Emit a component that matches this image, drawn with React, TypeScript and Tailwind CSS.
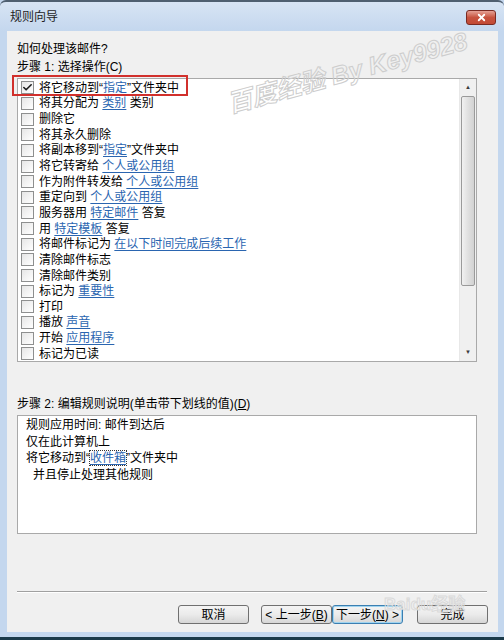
import { Check, X } from "lucide-react";

const font = "font-['Liberation_Sans','Noto_Sans_CJK_SC',sans-serif]";

type Part = { text: string; link?: boolean };

const ACTIONS: Part[][] = [
  [{ text: "将它移动到“" }, { text: "指定", link: true }, { text: "”文件夹中" }],
  [{ text: "将其分配为 " }, { text: "类别", link: true }, { text: " 类别" }],
  [{ text: "删除它" }],
  [{ text: "将其永久删除" }],
  [{ text: "将副本移到“" }, { text: "指定", link: true }, { text: "”文件夹中" }],
  [{ text: "将它转寄给 " }, { text: "个人或公用组", link: true }],
  [{ text: "作为附件转发给 " }, { text: "个人或公用组", link: true }],
  [{ text: "重定向到 " }, { text: "个人或公用组", link: true }],
  [{ text: "服务器用 " }, { text: "特定邮件", link: true }, { text: " 答复" }],
  [{ text: "用 " }, { text: "特定模板", link: true }, { text: " 答复" }],
  [{ text: "将邮件标记为 " }, { text: "在以下时间完成后续工作", link: true }],
  [{ text: "清除邮件标志" }],
  [{ text: "清除邮件类别" }],
  [{ text: "标记为 " }, { text: "重要性", link: true }],
  [{ text: "打印" }],
  [{ text: "播放 " }, { text: "声音", link: true }],
  [{ text: "开始 " }, { text: "应用程序", link: true }],
  [{ text: "标记为已读" }],
];

function CheckBox({ checked }: { checked?: boolean }) {
  return (
    <span className="w-[13px] h-[13px] border border-[#8e8f8f] bg-gradient-to-br from-[#e6e6e6] to-white flex items-center justify-center flex-shrink-0">
      {checked && <Check className="w-[11px] h-[11px] text-[#1c1c1c]" strokeWidth={3.5} />}
    </span>
  );
}

function Button({ label, focused }: { label: React.ReactNode; focused?: boolean }) {
  return (
    <button
      className={`h-[19px] w-[71px] rounded-[3px] border text-[12px] leading-none text-black flex items-center justify-center bg-gradient-to-b from-[#f4f4f4] via-[#ebebeb] to-[#d6d6d6] ${
        focused ? "border-[#3c7fb1] shadow-[inset_0_0_0_1px_#9fd4f0]" : "border-[#707070]"
      }`}
    >
      {label}
    </button>
  );
}

export default function App() {
  return (
    <div className={`${font} relative w-[504px] h-[640px] bg-[#c4d7ee] flex flex-col overflow-hidden`}>
      {/* Title bar */}
      <div className="h-[31px] flex-shrink-0 flex items-center justify-between pl-[10px] pr-[8px] border-t-2 border-[#4f5f70] rounded-t-[6px] bg-gradient-to-b from-[#d7e4f4] to-[#c4d7ee]">
        <span className="text-[12px] text-[#1e1e1e] mt-[1px]">规则向导</span>
        <div className="w-[30px] h-[15px] mt-[1px] rounded-[3px] border border-[#7a2a22] bg-gradient-to-b from-[#e5a195] via-[#c7533f] to-[#c24a35] flex items-center justify-center">
          <X className="w-[11px] h-[11px] text-white" strokeWidth={4} />
        </div>
      </div>

      {/* Client area */}
      <div className="mx-[7px] w-[491px] h-[601px] bg-[#f0f0f0] flex flex-col pl-[10px] text-[12px] text-black">
        <div className="mt-[10px] leading-[16px]">如何处理该邮件?</div>
        <div className="mt-[2px] leading-[16px]">步骤 1: 选择操作(C)</div>

        {/* Action list */}
        <div className="relative mt-[3px] w-[460px] h-[284px] border border-[#a9a9a9] bg-white flex">
          <div className="flex-1 pt-[1px]">
            {ACTIONS.map((parts, i) => (
              <div key={i} className="h-[15.65px] flex items-center pl-[3px] gap-[5px]">
                <CheckBox checked={i === 0} />
                <span className="whitespace-pre leading-none">
                  {parts.map((p, j) =>
                    p.link ? (
                      <span key={j} className="text-[#2a65b0] underline underline-offset-2">
                        {p.text}
                      </span>
                    ) : (
                      <span key={j}>{p.text}</span>
                    )
                  )}
                </span>
              </div>
            ))}
          </div>

          {/* Scrollbar */}
          <div className="w-[17px] bg-[#f0f0f0] flex flex-col items-center border-l border-[#e8e8e8]">
            <div className="h-[17px] w-full flex items-center justify-center text-[6px] text-[#3b3b3b]">▲</div>
            <div className="w-[14px] h-[190px] rounded-[2px] border border-[#9a9a9a] bg-gradient-to-r from-[#f1f1f1] via-[#e0e0e0] to-[#d2d2d2]" />
            <div className="flex-1" />
            <div className="h-[17px] w-full flex items-center justify-center text-[6px] text-[#3b3b3b]">▼</div>
          </div>

          {/* Red highlight */}
          <div className="absolute left-[-6px] top-[-4px] w-[176px] h-[21px] border-2 border-[#d1302c] pointer-events-none" />
        </div>

        <div className="mt-[34px] leading-[16px]">
          步骤 2: 编辑规则说明(单击带下划线的值)(<span className="underline">D</span>)
        </div>

        {/* Rule description */}
        <div className="mt-[3px] w-[460px] h-[119px] border border-[#a9a9a9] bg-white pl-[8px] pt-[1px] leading-[16.7px]">
          <div>规则应用时间: 邮件到达后</div>
          <div>仅在此计算机上</div>
          <div>
            将它移动到“
            <span className="outline-1 outline-dotted outline-[#333] text-[#2a65b0] underline underline-offset-2">收件箱</span>
            ”文件夹中
          </div>
          <div className="pl-[7px]">并且停止处理其他规则</div>
        </div>

        {/* Separator */}
        <div className="mt-[57px] w-[470px] border-t border-b border-t-[#a0a0a0] border-b-white" />

        {/* Buttons */}
        <div className="mt-[12px] flex items-center w-[471px] pl-[161px]">
          <Button label="取消" />
          <div className="w-[12px]" />
          <Button label={<>&lt; 上一步(<span className="underline">B</span>)</>} />
          <Button
            focused
            label={<>下一步(<span className="underline">N</span>) &gt;</>}
          />
          <div className="w-[14px]" />
          <Button label="完成" />
        </div>
      </div>

      {/* Bottom frame */}
      <div className="flex-1" />
      <div className="h-[3px] bg-[#1b3a4a]" />

      {/* Watermarks */}
      <div className="absolute left-[228px] top-[86px] -rotate-[15deg] origin-left text-[25px] italic font-bold text-transparent [-webkit-text-stroke:1px_#cdcdcd] pointer-events-none whitespace-nowrap">
        百度经验 By Key9928
      </div>
      <div className="absolute left-[384px] top-[592px] text-[17px] font-bold text-transparent [-webkit-text-stroke:1px_#dadada] pointer-events-none whitespace-nowrap">
        Baidu经验
      </div>
    </div>
  );
}
